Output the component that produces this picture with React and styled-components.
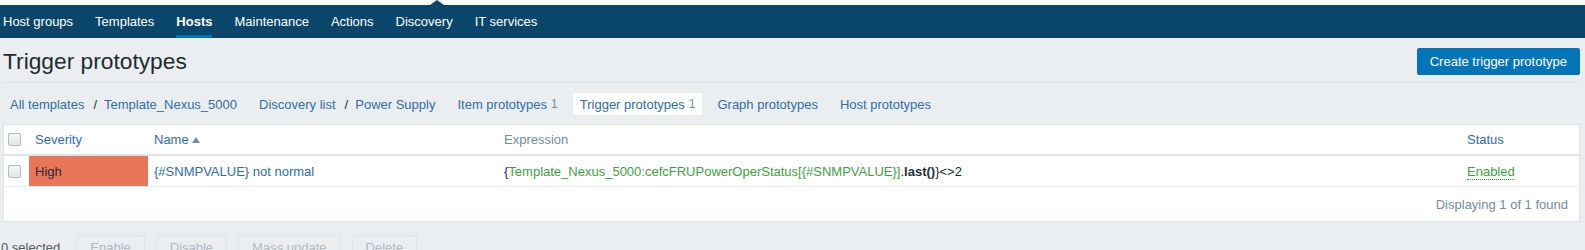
import styled, { createGlobalStyle } from "styled-components";

const GlobalStyle = createGlobalStyle`
  body {
    margin: 0;
    background: #ebeef0;
    font-family: "Liberation Sans", Arial, sans-serif;
    font-size: 13px;
    color: #1f2c33;
  }
`;

const TopStrip = styled.div`
  position: relative;
  height: 5px;
  background: #ffffff;
`;

const Pointer = styled.span`
  position: absolute;
  left: ${(p) => p.$left}px;
  bottom: 0;
  width: 0;
  height: 0;
  border-left: 7px solid transparent;
  border-right: 7px solid transparent;
  border-bottom: 5px solid #0a466a;
`;

const NavBar = styled.nav`
  display: flex;
  gap: 22px;
  height: 33px;
  padding-left: 3px;
  background: #0a466a;
`;

const NavItem = styled.a`
  display: flex;
  align-items: center;
  border-top: 3px solid transparent;
  border-bottom: 3px solid ${(p) => (p.$active ? "#0275b8" : "transparent")};
  color: #ffffff;
  font-weight: ${(p) => (p.$active ? "bold" : "normal")};
  text-decoration: none;
`;

const Header = styled.header`
  display: flex;
  align-items: center;
  justify-content: space-between;
  margin: 0 5px 0 3px;
  padding: 10px 0 7px;
  border-bottom: 1px solid #dde2e5;
`;

const Title = styled.h1`
  margin: 0;
  font-size: 22.75px;
  font-weight: normal;
  line-height: 27px;
  color: #1f2c33;
`;

const PrimaryButton = styled.button`
  height: 27px;
  padding: 0 12px;
  border: 1px solid #0275b8;
  border-radius: 2px;
  background: #0275b8;
  color: #ffffff;
  font: inherit;
`;

const Crumbs = styled.ul`
  display: flex;
  gap: 8px;
  margin: 10px 0 9px 3px;
  padding: 0;
  list-style: none;
`;

const Crumb = styled.li`
  display: flex;
  align-items: center;
  height: 22px;
  padding: 0 7px;
  border-radius: 2px;
  background: ${(p) => (p.$selected ? "#ffffff" : "transparent")};
`;

const Link = styled.a`
  color: #2f6ea6;
  text-decoration: none;
`;

const Sep = styled.span`
  margin: 0 7px 0 9px;
  color: #1f2c33;
`;

const Count = styled.sup`
  vertical-align: baseline;
  margin-left: 4px;
  font-size: 12px;
  color: #768d99;
`;

const Panel = styled.div`
  margin: 0 5px 0 3px;
  border: 1px solid #dfe4e7;
  background: #ffffff;
`;

const Table = styled.table`
  width: 100%;
  border-collapse: collapse;
  table-layout: fixed;
`;

const Th = styled.th`
  height: 29px;
  padding: 0 6px;
  border-bottom: 2px solid #dfe4e7;
  text-align: left;
  font-weight: normal;
  color: ${(p) => (p.$muted ? "#768d99" : "#2f6ea6")};
`;

const Td = styled.td`
  height: 30px;
  padding: 0 6px;
  border-bottom: 1px solid #ebeef0;
  background: ${(p) => p.$bg || "transparent"};
`;

const CheckCell = styled.td`
  padding: 0 0 0 4px;
  border-bottom: ${(p) => (p.$head ? "2px solid #dfe4e7" : "1px solid #ebeef0")};
`;

const Check = styled.span`
  display: block;
  width: 11px;
  height: 11px;
  border: 1px solid #acbbc2;
  border-radius: 2px;
  background: linear-gradient(#f5f6f7, #e2e6e9);
`;

const SortArrow = styled.span`
  display: inline-block;
  margin-left: 3px;
  vertical-align: 1px;
  border-left: 4px solid transparent;
  border-right: 4px solid transparent;
  border-bottom: 6px solid #768d99;
`;

const Green = styled.span`
  color: #429e47;
`;

const Status = styled.a`
  color: #429e47;
  text-decoration: none;
  border-bottom: 1px dotted #429e47;
`;

const Paging = styled.div`
  display: flex;
  align-items: center;
  justify-content: flex-end;
  height: 34px;
  padding-right: 11px;
  color: #768d99;
`;

const Actions = styled.div`
  display: flex;
  align-items: center;
  gap: 11px;
  margin-top: 13px;
  padding-left: 1px;
`;

const Selected = styled.span`
  margin-right: 5px;
  color: #4f5b61;
`;

const GhostButton = styled.button`
  height: 25px;
  padding: 0 13px;
  border: 1px solid #dfe4e7;
  border-radius: 2px;
  background: #ebeef0;
  color: #acbbc2;
  font: inherit;
`;

const navItems = ["Host groups", "Templates", "Hosts", "Maintenance", "Actions", "Discovery", "IT services"];

export default function App() {
  return (
    <>
      <GlobalStyle />
      <TopStrip>
        <Pointer $left={430} />
      </TopStrip>
      <NavBar>
        {navItems.map((item) => (
          <NavItem key={item} $active={item === "Hosts"}>
            {item}
          </NavItem>
        ))}
      </NavBar>

      <Header>
        <Title>Trigger prototypes</Title>
        <PrimaryButton>Create trigger prototype</PrimaryButton>
      </Header>

      <Crumbs>
        <Crumb>
          <Link>All templates</Link>
          <Sep>/</Sep>
          <Link>Template_Nexus_5000</Link>
        </Crumb>
        <Crumb>
          <Link>Discovery list</Link>
          <Sep>/</Sep>
          <Link>Power Supply</Link>
        </Crumb>
        <Crumb>
          <Link>Item prototypes</Link>
          <Count>1</Count>
        </Crumb>
        <Crumb $selected>
          <Link>Trigger prototypes</Link>
          <Count>1</Count>
        </Crumb>
        <Crumb>
          <Link>Graph prototypes</Link>
        </Crumb>
        <Crumb>
          <Link>Host prototypes</Link>
        </Crumb>
      </Crumbs>

      <Panel>
        <Table>
          <colgroup>
            <col style={{ width: 25 }} />
            <col style={{ width: 119 }} />
            <col style={{ width: 350 }} />
            <col />
            <col style={{ width: 118 }} />
          </colgroup>
          <thead>
            <tr>
              <CheckCell as="th" $head>
                <Check />
              </CheckCell>
              <Th>Severity</Th>
              <Th>
                Name
                <SortArrow />
              </Th>
              <Th $muted>Expression</Th>
              <Th>Status</Th>
            </tr>
          </thead>
          <tbody>
            <tr>
              <CheckCell>
                <Check />
              </CheckCell>
              <Td $bg="#e97659">High</Td>
              <Td>
                <Link>{"{#SNMPVALUE} not normal"}</Link>
              </Td>
              <Td>
                {"{"}
                <Green>{"Template_Nexus_5000:cefcFRUPowerOperStatus[{#SNMPVALUE}]"}</Green>
                .<b>last()</b>
                {"}<>2"}
              </Td>
              <Td>
                <Status>Enabled</Status>
              </Td>
            </tr>
          </tbody>
        </Table>
        <Paging>Displaying 1 of 1 found</Paging>
      </Panel>

      <Actions>
        <Selected>0 selected</Selected>
        <GhostButton>Enable</GhostButton>
        <GhostButton>Disable</GhostButton>
        <GhostButton>Mass update</GhostButton>
        <GhostButton>Delete</GhostButton>
      </Actions>
    </>
  );
}
